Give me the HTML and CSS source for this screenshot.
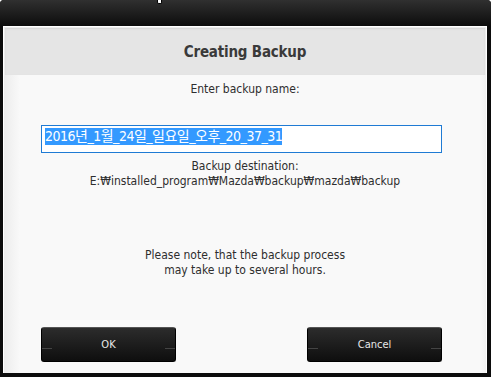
FILE: index.html
```html
<!DOCTYPE HTML>
<html>
  <head>
    <title>Creating Backup</title>
    <link rel="stylesheet" href="styles.css">
  </head>
  <body>
    <div id="frame" class="frame">
      <div class="titlebar"><span class="cursor"></span></div>
      <div class="panel">
        <div class="head"><h1>Creating Backup</h1></div>
        <div class="body">
          <div class="cell label">Enter backup name:</div>
          <div class="cell field"><div class="input"><span class="sel">2016년_1월_24일_일요일_오후_20_37_31</span></div></div>
          <div class="cell dest">Backup destination:<br>E:₩installed_program₩Mazda₩backup₩mazda₩backup</div>
          <div class="cell note">Please note, that the backup process<br>may take up to several hours.</div>
          <div class="cell buttons">
            <div class="button">OK</div>
            <div class="button">Cancel</div>
          </div>
        </div>
      </div>
    </div>
  </body>
</html>
```

FILE: styles.css
```css
html, body {
  margin: 0;
  background: #fff;
}
#frame {
  width: 491px;
  height: 377px;
  box-sizing: border-box;
  background: #0c0c0c;
  border-radius: 4px 4px 0 0;
  display: flex;
  flex-direction: column;
  padding: 0 4px 4px 3px;
  font-family: Tahoma, "DejaVu Sans Condensed", "DejaVu Sans", sans-serif;
}
#frame .titlebar {
  height: 26px;
  margin: 0 -4px 0 -3px;
  background: linear-gradient(#303030, #0c0c0c);
  border-radius: 4px 4px 0 0;
  position: relative;
}
#frame .titlebar .cursor {
  position: absolute;
  left: 157px;
  top: 0;
  width: 3px;
  height: 3px;
  background: #fff;
  border: 1px solid #000;
  border-top: none;
  border-radius: 0 0 2px 2px;
}
#frame .panel {
  flex: 1;
  display: flex;
  flex-direction: column;
  border: 1px solid #fff;
  border-bottom: none;
  background: #f9f9f9;
}
#frame .head {
  height: 47px;
  background: #e5e5e5;
  border: 1px solid #ededed;
  border-bottom: none;
  box-shadow: inset 0 1px 2px #d4d4d4;
  display: flex;
  align-items: center;
  justify-content: center;
}
#frame .head h1 {
  margin: 0;
  font-size: 15px;
  font-weight: bold;
  color: #3a3a3a;
  letter-spacing: -0.2px;
}
#frame .body {
  flex: 1;
  display: flex;
  flex-direction: column;
  align-items: center;
  background: linear-gradient(90deg, #ececec, #f9f9f9 16px, #f9f9f9 calc(100% - 6px), #f1f1f1);
  font-size: 12px;
  color: #2e2e2e;
  text-align: center;
  line-height: 15px;
}
#frame .body .label { margin-top: 7px; }
#frame .body .field {
  align-self: stretch;
  padding: 0 44px 0 37px;
  margin-top: 28px;
}
#frame .input {
  height: 28px;
  border: 1px solid #1f7bd4;
  background: #fff;
  text-align: left;
  padding: 2px 3px;
  box-sizing: border-box;
  font-size: 14px;
  line-height: 16px;
}
#frame .input .sel {
  display: inline-block;
  background: #3399ff;
  color: #fff;
  font-family: "DejaVu Sans Condensed", "Noto Sans CJK KR", sans-serif;
  letter-spacing: -0.5px;
  line-height: 16px;
  padding-bottom: 1px;
}
#frame .body .dest { margin-top: 6px; }
#frame .body .note { margin-top: 59px; }
#frame .body .buttons {
  align-self: stretch;
  display: flex;
  justify-content: space-between;
  padding: 0 44px 0 37px;
  margin-top: 49px;
}
#frame .body .button {
  width: 135px;
  height: 35px;
  box-sizing: border-box;
  border: 1px solid #000;
  border-top-color: #555;
  border-radius: 3px;
  background: linear-gradient(#2c2c2c, #0e0e0e);
  color: #e8e8e8;
  font-size: 11px;
  display: flex;
  align-items: center;
  justify-content: center;
  position: relative;
}
#frame .body .button:before, #frame .body .button:after {
  content: '';
  position: absolute;
  top: 20px;
  width: 10px;
  height: 1px;
  background: #444;
}
#frame .body .button:before { left: 0; }
#frame .body .button:after { right: 0; }
```
